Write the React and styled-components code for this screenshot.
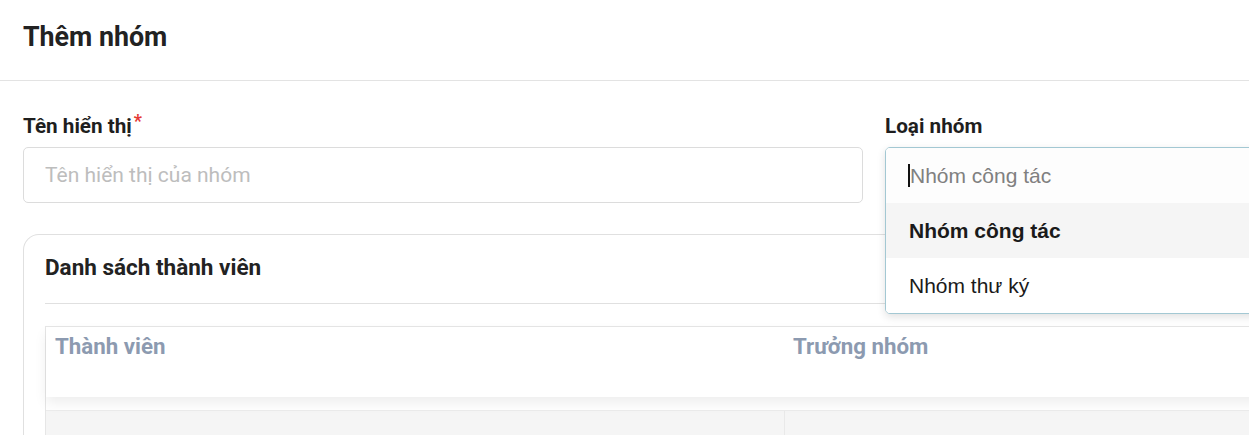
import styled, { createGlobalStyle } from 'styled-components';

const GlobalStyle = createGlobalStyle`
  body {
    margin: 0;
    background: #fff;
    font-family: Roboto, "Noto Sans", sans-serif;
    overflow: hidden;
  }
`;

const options = [
  { label: 'Nhóm công tác', active: true },
  { label: 'Nhóm thư ký', active: false },
];

const App = () => {
  return (
    <Modal>
      <GlobalStyle />
      <Header>
        <Title>Thêm nhóm</Title>
      </Header>
      <Body>
        <FormRow>
          <Field>
            <Label>
              Tên hiển thị<Required>*</Required>
            </Label>
            <Input placeholder="Tên hiển thị của nhóm" />
          </Field>
          <Field>
            <Label>Loại nhóm</Label>
            <SelectWrap>
              <Select>
                <SelectControl>
                  <Caret />
                  <SelectPlaceholder>Nhóm công tác</SelectPlaceholder>
                </SelectControl>
                {options.map(o => (
                  <Option key={o.label} active={o.active}>
                    {o.label}
                  </Option>
                ))}
              </Select>
            </SelectWrap>
          </Field>
        </FormRow>
        <Card>
          <CardTitle>Danh sách thành viên</CardTitle>
          <Table>
            <HeadRow>
              <HeadCell width="738px">Thành viên</HeadCell>
              <HeadCell>Trưởng nhóm</HeadCell>
            </HeadRow>
            <BodyRow>
              <BodyCell width="738px" />
              <BodyCell />
            </BodyRow>
          </Table>
        </Card>
      </Body>
    </Modal>
  );
};

const Modal = styled.div`
  width: 1770px;
  background: #fff;
`;

const Header = styled.div`
  display: flex;
  align-items: center;
  height: 80px;
  padding: 0 23px;
  border-bottom: 1px solid #e3e3e3;
`;

const Title = styled.h2`
  margin: 0 0 7px;
  font-size: 26.8px;
  font-weight: 700;
  color: #222;
`;

const Body = styled.div`
  padding: 32px 23px 0;
`;

const FormRow = styled.div`
  display: grid;
  grid-template-columns: 840px 840px;
  gap: 22px;
`;

const Field = styled.div`
  display: flex;
  flex-direction: column;
`;

const Label = styled.label`
  display: block;
  height: 26px;
  margin-bottom: 8px;
  font-size: 20.7px;
  font-weight: 700;
  line-height: 26px;
  color: #1e1e1e;
`;

const Required = styled.span`
  position: relative;
  top: -6px;
  margin-left: 2px;
  color: #e53935;
  font-size: 18px;
`;

const Input = styled.input`
  box-sizing: border-box;
  height: 56px;
  padding: 0 21px;
  border: 1px solid #dcdcdc;
  border-radius: 5px;
  font-family: Roboto, sans-serif;
  font-size: 21px;
  outline: none;
  &::placeholder {
    color: #bdbdbd;
  }
`;

const SelectWrap = styled.div`
  position: relative;
  height: 56px;
`;

const Select = styled.div`
  position: absolute;
  top: 0;
  left: 0;
  right: 0;
  z-index: 5;
  background: #fff;
  border: 1px solid #a3c8d3;
  border-radius: 5px;
  box-shadow: 0 3px 8px rgba(0, 0, 0, 0.12);
  overflow: hidden;
  font-family: "Liberation Sans", Arial, sans-serif;
`;

const SelectControl = styled.div`
  display: flex;
  align-items: center;
  height: 55px;
  padding-left: 22px;
  background: #fdfdfd;
`;

const Caret = styled.span`
  width: 2px;
  height: 23px;
  background: #111;
`;

const SelectPlaceholder = styled.span`
  font-size: 21px;
  color: #808080;
`;

const Option = styled.div`
  display: flex;
  align-items: center;
  height: 55px;
  padding-left: 23px;
  font-size: 21px;
  font-weight: ${props => (props.active ? 700 : 400)};
  color: #1a1a1a;
  background: ${props => (props.active ? '#f5f5f5' : '#fff')};
`;

const Card = styled.div`
  margin-top: 31px;
  padding: 0 21px;
  border: 1px solid #e0e0e0;
  border-bottom: none;
  border-radius: 16px 16px 0 0;
  height: 220px;
`;

const CardTitle = styled.div`
  display: flex;
  align-items: center;
  height: 63px;
  padding-bottom: 5px;
  border-bottom: 1px solid #e0e0e0;
  font-size: 22.5px;
  font-weight: 700;
  color: #222;
`;

const Table = styled.div`
  margin-top: 22px;
  border: 1px solid #e6e6e6;
`;

const HeadRow = styled.div`
  display: flex;
  height: 70px;
  background: #fff;
  position: relative;
  box-shadow: 0 6px 12px rgba(0, 0, 0, 0.07);
`;

const HeadCell = styled.div`
  flex: ${props => (props.width ? `0 0 ${props.width}` : '1')};
  padding: 6px 9px 0;
  font-size: 22.3px;
  font-weight: 700;
  color: #8c9ab0;
  box-sizing: border-box;
`;

const BodyRow = styled.div`
  display: flex;
  height: 60px;
  margin-top: 13px;
  background: #f5f5f5;
  border-top: 1px solid #ececec;
`;

const BodyCell = styled.div`
  flex: ${props => (props.width ? `0 0 ${props.width}` : '1')};
  border-right: ${props => (props.width ? '1px solid #e9e9e9' : 'none')};
`;

export default App;
